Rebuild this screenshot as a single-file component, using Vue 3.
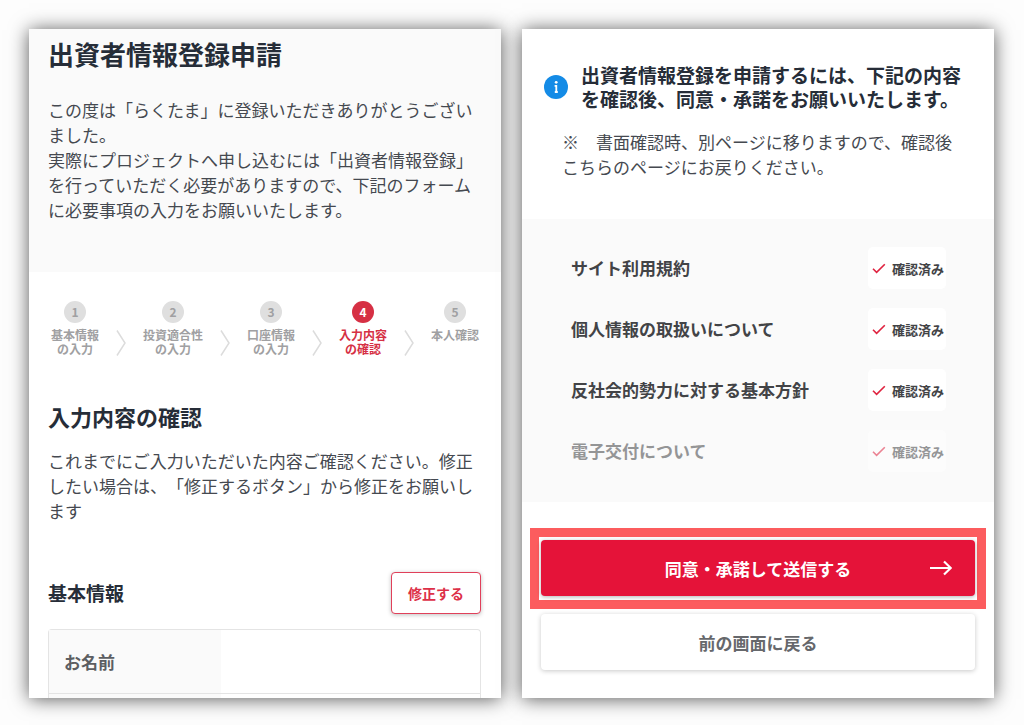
<script setup>
const steps = [
  { label: '基本情報\nの入力' },
  { label: '投資適合性\nの入力' },
  { label: '口座情報\nの入力' },
  { label: '入力内容\nの確認', active: true },
  { label: '本人確認' },
]

const documents = [
  { label: 'サイト利用規約' },
  { label: '個人情報の取扱いについて' },
  { label: '反社会的勢力に対する基本方針' },
  { label: '電子交付について', muted: true },
]
</script>

<template>
  <div class="page">
    <main class="panel">
      <header class="intro">
        <h1>出資者情報登録申請</h1>
        <p class="text">
          この度は「らくたま」に登録いただきありがとうございました。<br />実際にプロジェクトへ申し込むには「出資者情報登録」を行っていただく必要がありますので、下記のフォームに必要事項の入力をお願いいたします。
        </p>
      </header>

      <ol class="steps">
        <template v-for="(step, i) in steps" :key="i">
          <li v-if="i > 0" class="divider" aria-hidden="true">
            <svg width="10" height="26" viewBox="0 0 10 26">
              <path d="M1 0.5 L9 13 L1 25.5" fill="none" stroke="#dcdcdc" stroke-width="1.5" />
            </svg>
          </li>
          <li class="step" :class="{ active: step.active }">
            <span class="num">{{ i + 1 }}</span>
            <span class="step-label">{{ step.label }}</span>
          </li>
        </template>
      </ol>

      <section class="confirm">
        <h2>入力内容の確認</h2>
        <p class="text">
          これまでにご入力いただいた内容ご確認ください。修正したい場合は、「修正するボタン」から修正をお願いします
        </p>
        <div class="section-head">
          <h3>基本情報</h3>
          <button type="button" class="edit">修正する</button>
        </div>
        <table class="info">
          <tbody>
            <tr>
              <th scope="row">お名前</th>
              <td></td>
            </tr>
            <tr class="next">
              <th></th>
              <td></td>
            </tr>
          </tbody>
        </table>
      </section>
    </main>

    <aside class="panel">
      <div class="notice">
        <svg class="info-icon" width="24" height="24" viewBox="0 0 24 24" aria-hidden="true">
          <circle cx="12" cy="12" r="12" fill="#148be6" />
          <circle cx="12.2" cy="7.3" r="1.4" fill="#fff" />
          <path d="M10.6 10.8 H12.3 V17.2 M10.8 17 H13.8" fill="none" stroke="#fff" stroke-width="1.8" />
        </svg>
        <h2>出資者情報登録を申請するには、下記の内容を確認後、同意・承諾をお願いいたします。</h2>
      </div>
      <p class="text note">
        ※　書面確認時、別ページに移りますので、確認後こちらのページにお戻りください。
      </p>

      <ul class="docs">
        <li v-for="doc in documents" :key="doc.label" :class="{ muted: doc.muted }">
          <span>{{ doc.label }}</span>
          <button type="button" class="checked">
            <svg width="14" height="11" viewBox="0 0 14 11" aria-hidden="true">
              <path d="M1 5.8 L4.6 9.4 L12.8 1.2" fill="none" stroke="#df2340" stroke-width="1.6" />
            </svg>
            確認済み
          </button>
        </li>
      </ul>

      <div class="highlight">
        <button type="button" class="submit">
          <span class="submit-label">同意・承諾して送信する</span>
          <svg width="22" height="16" viewBox="0 0 22 16" aria-hidden="true">
            <path d="M0 8 H20.5 M14 1.5 L20.8 8 L14 14.5" fill="none" stroke="#fff" stroke-width="2.2" />
          </svg>
        </button>
      </div>
      <button type="button" class="back">前の画面に戻る</button>
    </aside>
  </div>
</template>

<style>
body {
  margin: 0;
  background: #fdfdfd;
}
</style>

<style scoped>
.page {
  box-sizing: border-box;
  min-height: 100vh;
  display: grid;
  grid-template-columns: 1fr 1fr;
  gap: 21px;
  padding: 29px 30px 28px 29px;
  font-family: "Noto Sans CJK JP", sans-serif;
  text-spacing-trim: space-all;
  color: #262d38;
}

.panel {
  background: #fff;
  box-shadow: 0 1px 18px rgba(0, 0, 0, 0.65);
}

h1,
h2,
h3,
p,
ol,
ul {
  margin: 0;
  padding: 0;
}

ol,
ul {
  list-style: none;
}

button {
  padding: 0;
  border: 0;
  background: #fff;
  font-family: inherit;
  font-weight: 700;
  cursor: pointer;
}

.text {
  font-size: 17px;
  line-height: 25px;
  color: #454950;
}

.intro {
  padding: 7px 20px 50px 19px;
  background: #fafafa;
}

h1 {
  margin-bottom: 25px;
  font-size: 26px;
  line-height: 36px;
}

.steps {
  display: flex;
  justify-content: space-between;
  padding: 29px 22px 0;
}

.step {
  display: flex;
  flex-direction: column;
  align-items: center;
  font-size: 12px;
  font-weight: 700;
  line-height: 14px;
  text-align: center;
  color: #a0a0a2;
}

.num {
  width: 22px;
  margin-bottom: 5px;
  border-radius: 50%;
  background: #dfdfdf;
  line-height: 22px;
}

.step-label {
  white-space: pre-line;
}

.active {
  color: #d63044;
}

.active .num {
  background: #d63044;
  color: #fff;
}

.divider {
  padding-top: 29px;
}

.divider svg {
  display: block;
}

.confirm {
  padding: 45px 20px 0 19px;
}

.confirm h2 {
  margin-bottom: 17px;
  font-size: 22px;
  line-height: 30px;
}

.section-head {
  display: flex;
  align-items: center;
  justify-content: space-between;
  margin: 49px 0 15px;
}

h3 {
  font-size: 19px;
  line-height: 28px;
}

.edit {
  height: 42px;
  padding: 0 16px;
  border: 1px solid #e0405a;
  border-radius: 4px;
  box-shadow: 0 1px 4px rgba(0, 0, 0, 0.25);
  font-size: 14px;
  color: #dd3048;
}

.info {
  width: 100%;
  border: 1px solid #e4e4e4;
  border-bottom: 0;
  border-radius: 4px 4px 0 0;
  border-spacing: 0;
  table-layout: fixed;
}

.info th {
  width: 40%;
  height: 63px;
  box-sizing: border-box;
  padding: 0 15px;
  background: #fafafa;
  font-size: 17px;
  font-weight: 700;
  line-height: 24px;
  text-align: left;
  color: #5c5e62;
}

.info .next th,
.info .next td {
  height: 4px;
  padding: 0;
  border-top: 1px solid #e4e4e4;
  line-height: 0;
}

.notice {
  display: flex;
  align-items: center;
  gap: 13px;
  padding: 34px 22px 0;
}

.info-icon {
  flex: none;
}

.notice h2 {
  font-size: 19px;
  line-height: 24px;
}

.note {
  padding: 18px 32px 40px 40px;
}

.docs {
  display: grid;
  gap: 19px;
  padding: 28px 48px 30px 49px;
  background: #fafafa;
  font-size: 17px;
  font-weight: 700;
  line-height: 24px;
  color: #424346;
}

.docs li {
  display: flex;
  align-items: center;
  justify-content: space-between;
}

.muted {
  opacity: 0.55;
}

.checked {
  display: flex;
  align-items: center;
  gap: 6px;
  height: 42px;
  padding: 0 2px 0 4px;
  border-radius: 5px;
  font-size: 13px;
  color: #424346;
}

.highlight {
  margin: 26px 8px 5px;
  padding: 3px 2px 4px;
  border: 9px solid #fc5c5e;
}

.submit {
  display: grid;
  grid-template-columns: 1fr auto 1fr;
  align-items: center;
  width: 100%;
  height: 56px;
  padding: 0 23px;
  border-radius: 4px;
  background: #e51339;
  box-shadow: 0 1px 4px rgba(0, 0, 0, 0.3);
  font-size: 17px;
  color: #fff;
}

.submit-label {
  grid-column: 2;
}

.submit svg {
  justify-self: end;
}

.back {
  display: block;
  width: calc(100% - 38px);
  height: 56px;
  margin: 0 19px 27px;
  border-radius: 4px;
  box-shadow: 0 1px 5px rgba(0, 0, 0, 0.22);
  font-size: 17px;
  color: #66686c;
}
</style>
